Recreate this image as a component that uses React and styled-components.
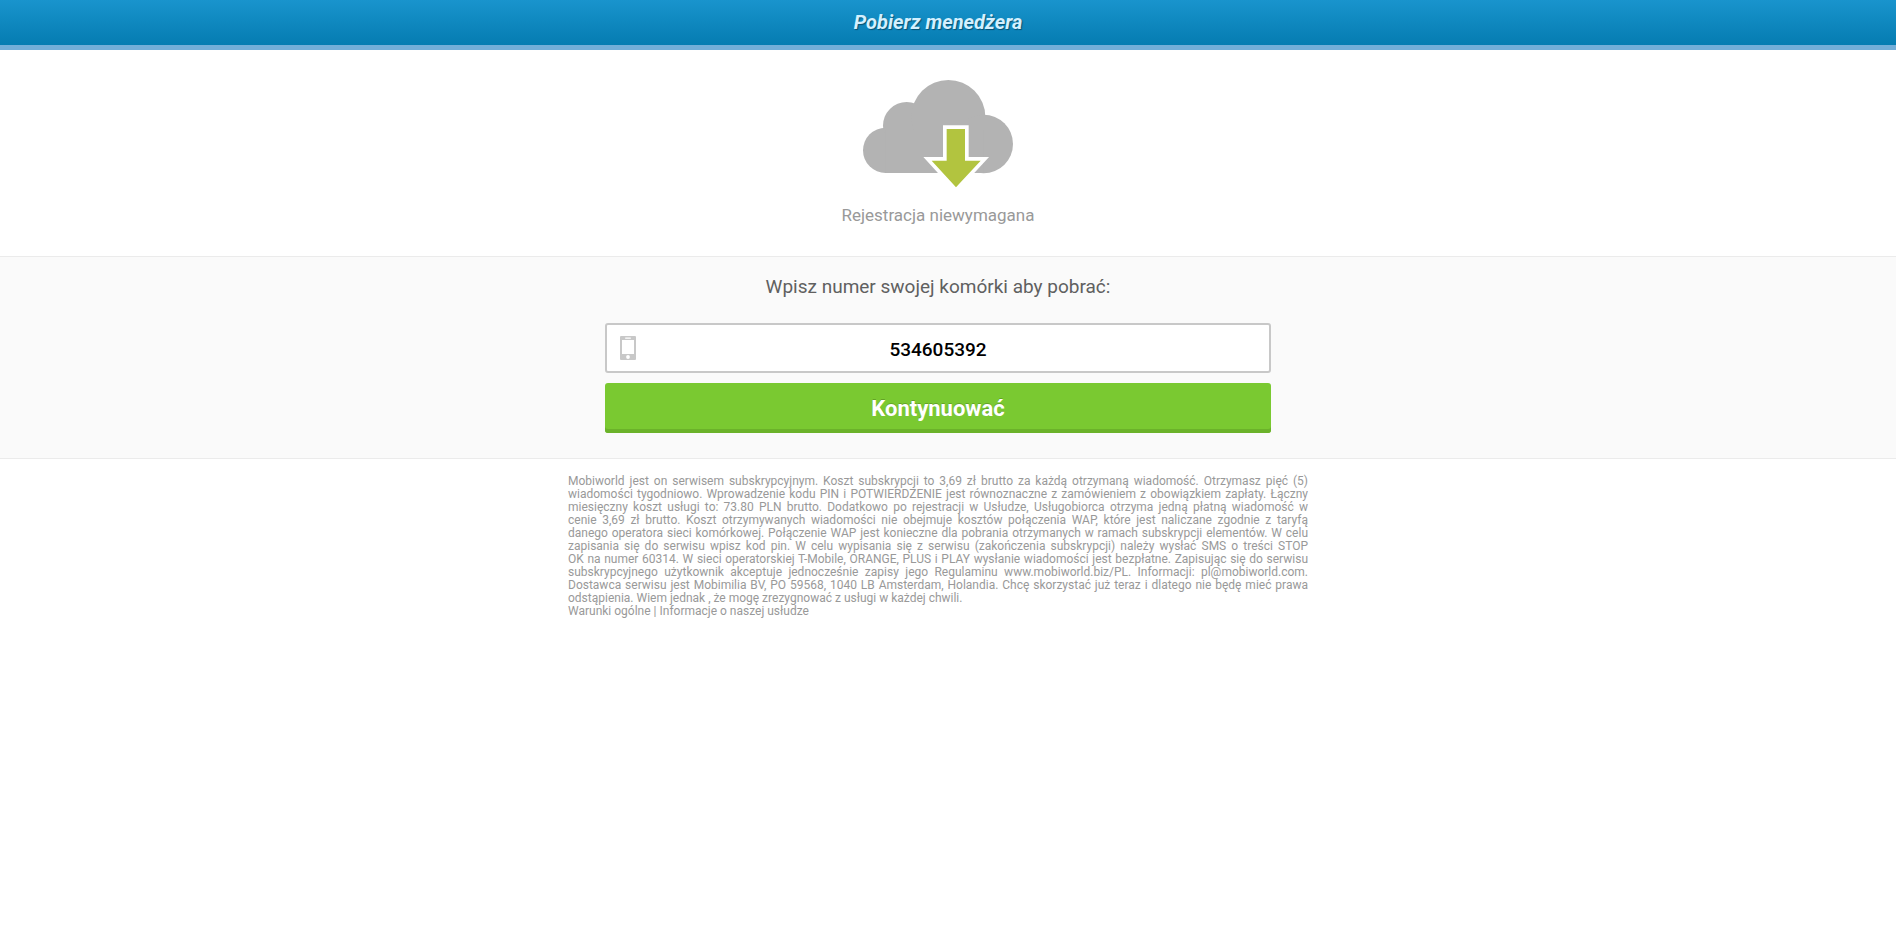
import React, { useState } from 'react'
import styled, { createGlobalStyle } from 'styled-components'

const GlobalStyle = createGlobalStyle`
  * {
    box-sizing: border-box;
  }
  body {
    margin: 0;
    background: #fff;
    font-family: Roboto, 'Open Sans', sans-serif;
  }
  p, h1 {
    margin: 0;
  }
`

const Header = styled.header`
  padding: 0 20px 0 0;
  border-bottom: 5px solid #73aed8;
  background: linear-gradient(#1994cd, #057cb1);
  text-align: center;
  h1 {
    font-size: 20px;
    line-height: 45px;
    font-weight: 700;
    font-style: italic;
    color: #d3f0ff;
    text-shadow: 1px 1px 1px rgba(0, 0, 0, .4);
  }
`

const Intro = styled.section`
  padding: 30px 20px 29px 0;
  text-align: center;
  p {
    margin-top: 15px;
    font-size: 17px;
    line-height: 24px;
    color: #999;
  }
`

const CloudSvg = styled.svg`
  display: block;
  width: 150px;
  height: 108px;
  margin: 0 auto;
`

const FormSection = styled.section`
  padding: 16px 20px 25px 0;
  border-top: 1px solid #ebebeb;
  border-bottom: 1px solid #ebebeb;
  background: #fafafa;
`

const Form = styled.form`
  width: 90%;
  max-width: 666px;
  margin: 0 auto;
  label {
    display: block;
    margin-bottom: 22px;
    font-size: 19px;
    line-height: 28px;
    text-align: center;
    color: #606060;
  }
`

const PhoneField = styled.div`
  display: flex;
  align-items: center;
  height: 50px;
  margin-bottom: 10px;
  padding: 0 13px;
  border: 2px solid #c8c8c8;
  border-radius: 3px;
  background: #fff;
  svg {
    flex: none;
    width: 16px;
    height: 24px;
  }
  input {
    flex: 1;
    min-width: 0;
    height: 46px;
    padding: 2px 16px 0 0;
    border: 0;
    outline: 0;
    background: none;
    font-family: inherit;
    font-size: 19px;
    font-weight: 500;
    text-align: center;
    color: #000;
  }
`

const SubmitButton = styled.button`
  display: block;
  width: 100%;
  height: 50px;
  padding: 0;
  border: 0;
  border-radius: 3px;
  background: #7ac931;
  box-shadow: inset 0 -4px 0 #6bb22a;
  font-family: inherit;
  font-size: 22px;
  font-weight: 700;
  color: #fff;
  text-shadow: 0 -1px 0 rgba(0, 0, 0, .2);
  cursor: pointer;
`

const Footer = styled.footer`
  padding: 16px 20px 16px 0;
`

const Legal = styled.div`
  max-width: 740px;
  margin: 0 auto;
  font-size: 12px;
  line-height: 13px;
  text-align: justify;
  color: #999;
  a {
    color: inherit;
    text-decoration: none;
  }
`

const CloudIcon = () => (
  <CloudSvg viewBox="69 30 450 324" aria-hidden="true">
    <g fill="#b3b3b3">
      <circle cx="137" cy="241" r="68" />
      <circle cx="200" cy="167" r="71" />
      <circle cx="325" cy="141" r="111" />
      <circle cx="431" cy="222" r="88" />
      <path d="M137 180H431V309H137Z" />
    </g>
    <path
      d="M320 177H375V272H422L348 352L275 272H320Z"
      fill="none"
      stroke="#fff"
      strokeWidth="22"
    />
    <path d="M320 177H375V272H422L348 352L275 272H320Z" fill="#b2c43f" />
  </CloudSvg>
)

const PhoneIcon = () => (
  <svg viewBox="0 0 16 24" aria-hidden="true">
    <rect width="16" height="24" rx="1" fill="#c8c8c8" />
    <rect x="2" y="4" width="12" height="14" fill="#fff" />
    <rect x="5" y="1.5" width="6" height="1.2" rx=".6" fill="#fff" />
    <circle cx="8" cy="21" r="1.9" fill="#fff" />
  </svg>
)

const App = () => {
  const [phone, setPhone] = useState('534605392')

  return (
    <>
      <GlobalStyle />
      <Header>
        <h1>Pobierz menedżera</h1>
      </Header>
      <main>
        <Intro>
          <CloudIcon />
          <p>Rejestracja niewymagana</p>
        </Intro>
        <FormSection>
          <Form onSubmit={e => e.preventDefault()}>
            <label htmlFor="phone">Wpisz numer swojej komórki aby pobrać:</label>
            <PhoneField>
              <PhoneIcon />
              <input
                id="phone"
                type="tel"
                value={phone}
                onChange={e => setPhone(e.target.value)}
              />
            </PhoneField>
            <SubmitButton type="submit">Kontynuować</SubmitButton>
          </Form>
        </FormSection>
      </main>
      <Footer>
        <Legal>
          <p>
            Mobiworld jest on serwisem subskrypcyjnym. Koszt subskrypcji to 3,69 zł brutto za każdą
            otrzymaną wiadomość. Otrzymasz pięć (5) wiadomości tygodniowo. Wprowadzenie kodu PIN i
            POTWIERDZENIE jest równoznaczne z zamówieniem z obowiązkiem zapłaty. Łączny miesięczny
            koszt usługi to: 73.80 PLN brutto. Dodatkowo po rejestracji w Usłudze, Usługobiorca
            otrzyma jedną płatną wiadomość w cenie&nbsp;3,69&nbsp;zł brutto. Koszt otrzymywanych
            wiadomości nie obejmuje kosztów połączenia WAP, które jest naliczane zgodnie z taryfą
            danego&nbsp;operatora sieci komórkowej. Połączenie WAP jest konieczne dla pobrania
            otrzymanych w ramach subskrypcji elementów. W celu zapisania się do serwisu wpisz kod
            pin. W celu wypisania się z serwisu (zakończenia subskrypcji) należy wysłać SMS o
            treści STOP OK&nbsp;na&nbsp;numer 60314. W sieci operatorskiej T-Mobile, ORANGE, PLUS i
            PLAY wysłanie wiadomości jest bezpłatne. Zapisując się do serwisu subskrypcyjnego
            użytkownik akceptuje jednocześnie zapisy jego Regulaminu www.mobiworld.biz/PL.
            Informacji: pl@mobiworld.com. Dostawca serwisu jest Mobimilia BV, PO 59568, 1040 LB
            Amsterdam, Holandia. Chcę skorzystać już teraz i dlatego nie będę mieć prawa
            odstąpienia. Wiem jednak , że mogę zrezygnować z usługi w każdej chwili.
          </p>
          <p>
            <a href="#warunki">Warunki ogólne</a> | <a href="#informacje">Informacje o naszej usłudze</a>
          </p>
        </Legal>
      </Footer>
    </>
  )
}

export default App
